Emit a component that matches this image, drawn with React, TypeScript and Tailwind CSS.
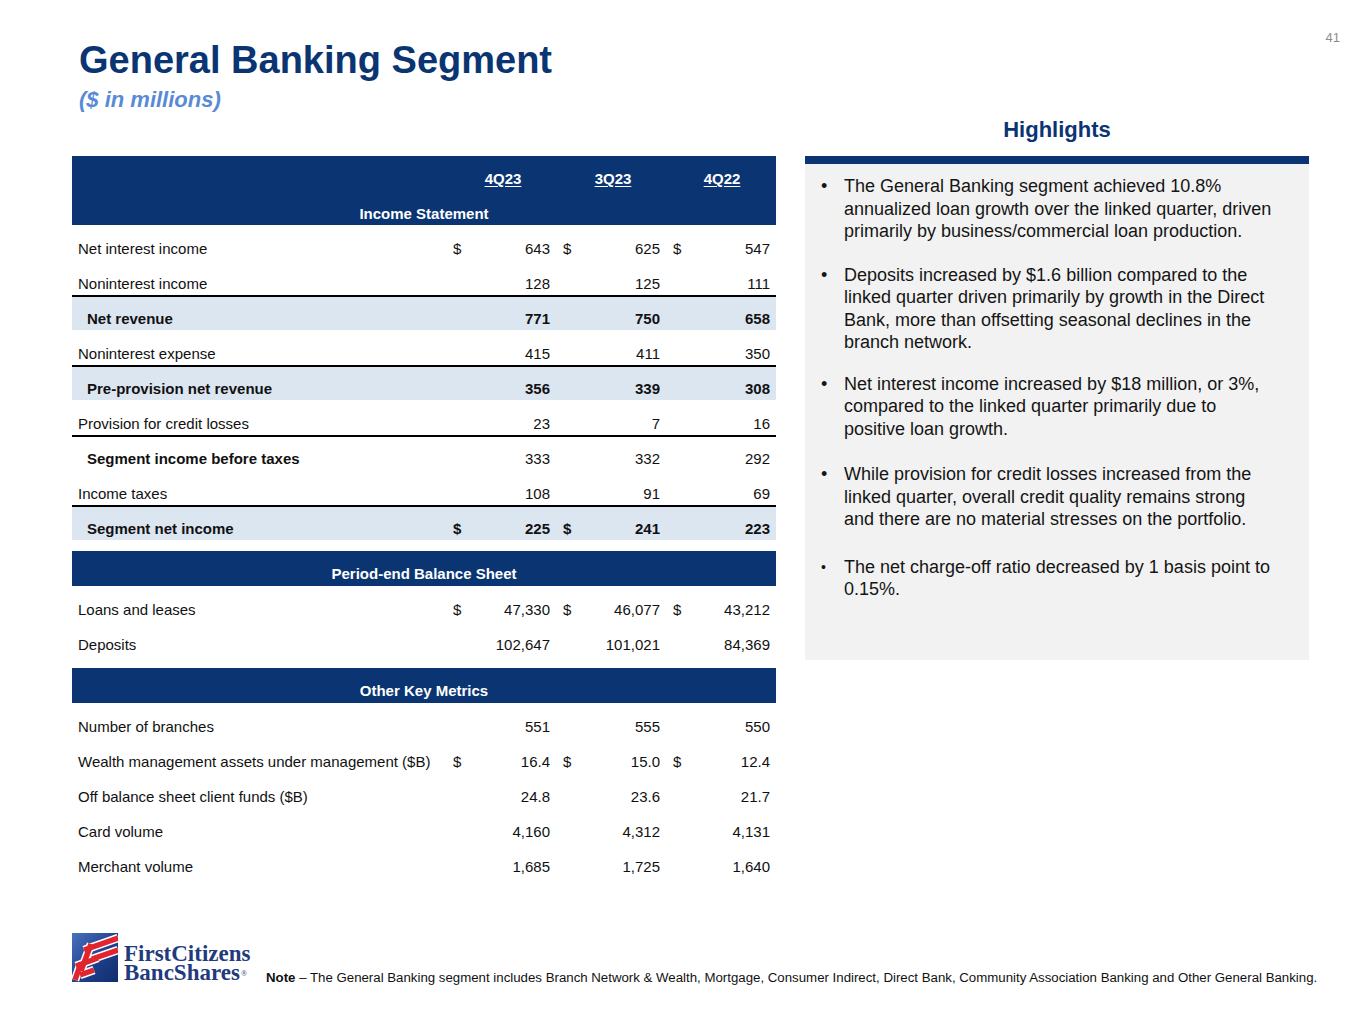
import React from 'react';

type Row = {
  label: string;
  values: string[];
  dollars?: boolean[];
  bold?: boolean;
  boldLabel?: boolean;
  shade?: boolean;
  rule?: boolean;
};

const incomeRows: Row[] = [
  { label: 'Net interest income', values: ['643', '625', '547'], dollars: [true, true, true] },
  { label: 'Noninterest income', values: ['128', '125', '111'] },
  { label: 'Net revenue', values: ['771', '750', '658'], bold: true, shade: true, rule: true },
  { label: 'Noninterest expense', values: ['415', '411', '350'] },
  { label: 'Pre-provision net revenue', values: ['356', '339', '308'], bold: true, shade: true, rule: true },
  { label: 'Provision for credit losses', values: ['23', '7', '16'] },
  { label: 'Segment income before taxes', values: ['333', '332', '292'], boldLabel: true, rule: true },
  { label: 'Income taxes', values: ['108', '91', '69'] },
  {
    label: 'Segment net income',
    values: ['225', '241', '223'],
    dollars: [true, true, false],
    bold: true,
    shade: true,
    rule: true,
  },
];

const balanceRows: Row[] = [
  { label: 'Loans and leases', values: ['47,330', '46,077', '43,212'], dollars: [true, true, true] },
  { label: 'Deposits', values: ['102,647', '101,021', '84,369'] },
];

const metricRows: Row[] = [
  { label: 'Number of branches', values: ['551', '555', '550'] },
  {
    label: 'Wealth management assets under management ($B)',
    values: ['16.4', '15.0', '12.4'],
    dollars: [true, true, true],
  },
  { label: 'Off balance sheet client funds ($B)', values: ['24.8', '23.6', '21.7'] },
  { label: 'Card volume', values: ['4,160', '4,312', '4,131'] },
  { label: 'Merchant volume', values: ['1,685', '1,725', '1,640'] },
];

const highlights: string[][] = [
  [
    'The General Banking segment achieved 10.8%',
    'annualized loan growth over the linked quarter, driven',
    'primarily by business/commercial loan production.',
  ],
  [
    'Deposits increased by $1.6 billion compared to the',
    'linked quarter driven primarily by growth in the Direct',
    'Bank, more than offsetting seasonal declines in the',
    'branch network.',
  ],
  [
    'Net interest income increased by $18 million, or 3%,',
    'compared to the linked quarter primarily due to',
    'positive loan growth.',
  ],
  [
    'While provision for credit losses increased from the',
    'linked quarter, overall credit quality remains strong',
    'and there are no material stresses on the portfolio.',
  ],
  ['The net charge-off ratio decreased by 1 basis point to', '0.15%.'],
];

// gaps under each bullet, read off the slide
const bulletGaps = ['mb-[21px]', 'mb-[19px]', 'mb-[23px]', 'mb-[25px]', ''];

const colWidths = ['w-[110px] pr-[8px]', 'w-[110px] pr-[8px]', 'w-[108px] pr-[6px]'];

function TableRow({ row }: { row: Row }) {
  const strong = row.bold ? 'font-bold' : '';
  return (
    <div
      className={`flex h-[35px] items-end pb-[3px] text-[15px] leading-[17px] text-[#111] ${
        row.shade ? 'bg-[#dce6f1]' : ''
      } ${row.rule ? 'border-t-2 border-black' : ''}`}
    >
      <div
        className={`w-[376px] ${row.bold || row.boldLabel ? 'pl-[15px] font-bold' : 'pl-[6px]'}`}
      >
        {row.label}
      </div>
      {row.values.map((v, i) => (
        <div key={i} className={`flex justify-between pl-[5px] ${colWidths[i]} ${strong}`}>
          <span>{row.dollars?.[i] ? '$' : ''}</span>
          <span>{v}</span>
        </div>
      ))}
    </div>
  );
}

function SectionHeader({ title }: { title: string }) {
  return (
    <div className="h-[35px] bg-[#0a3572] pt-[14px] text-center text-[15px] font-bold leading-[17px] text-white">
      {title}
    </div>
  );
}

function Logo() {
  return (
    <div className="flex w-[194px] items-end">
      <svg width="46" height="49" viewBox="0 0 46 49">
        <defs>
          <linearGradient id="fcb" x1="0" y1="0" x2="1" y2="1">
            <stop offset="0" stopColor="#4a72bf" />
            <stop offset="0.55" stopColor="#1d3f8c" />
            <stop offset="1" stopColor="#122d6b" />
          </linearGradient>
        </defs>
        <rect width="46" height="49" fill="url(#fcb)" />
        <g stroke="#fff" strokeWidth="8.5" strokeLinecap="butt" fill="none">
          <path d="M12 17 L46 5" />
          <path d="M20 26 L46 17" />
          <path d="M19 11 L9 38" />
          <path d="M4 33 L26 25" />
          <path d="M8 42 L22 37" />
          <path d="M9 30 L3 47" />
        </g>
        <g stroke="#e0252f" strokeWidth="5.5" strokeLinecap="butt" fill="none">
          <path d="M12 17 L46 5" />
          <path d="M20 26 L46 17" />
          <path d="M19 11 L9 38" />
          <path d="M4 33 L26 25" />
          <path d="M8 42 L22 37" />
          <path d="M9 30 L3 47" />
        </g>
      </svg>
      <div className="ml-[6px] font-['Liberation_Serif','Times_New_Roman',serif] text-[23px] font-bold text-[#1f3b7d]">
        <div className="h-[19px] leading-[20px]">FirstCitizens</div>
        <div className="h-[19px] leading-[20px]">
          BancShares<sup className="ml-[1px] text-[8px] font-normal">®</sup>
        </div>
      </div>
    </div>
  );
}

export default function App() {
  return (
    <div className="flex h-[1024px] w-[1365px] flex-col bg-white font-['Liberation_Sans',Arial,sans-serif]">
      <div className="flex justify-between pl-[79px] pr-[25px] pt-[30px]">
        <div className="mt-[11px]">
          <h1 className="text-[38px] font-bold leading-[38px] text-[#0a3572]">General Banking Segment</h1>
          <p className="mt-[8px] text-[22px] font-bold italic leading-[26px] text-[#5b8ad5]">($ in millions)</p>
        </div>
        <div className="text-[13px] leading-[15px] text-[#8c8c8c]">41</div>
      </div>

      <div className="flex">
        <div className="ml-[72px] mt-[43px] w-[704px]">
          <div className="h-[69px] bg-[#0a3572] pt-[14px] text-[15px] font-bold leading-[17px] text-white">
            <div className="flex">
              <div className="w-[376px]" />
              {['4Q23', '3Q23', '4Q22'].map((q, i) => (
                <div key={q} className={`${i === 2 ? 'w-[108px]' : 'w-[110px]'} text-center`}>
                  <span className="underline underline-offset-2">{q}</span>
                </div>
              ))}
            </div>
            <div className="mt-[18px] text-center">Income Statement</div>
          </div>
          {incomeRows.map(r => (
            <TableRow key={r.label} row={r} />
          ))}

          <div className="mt-[11px]">
            <SectionHeader title="Period-end Balance Sheet" />
          </div>
          {balanceRows.map(r => (
            <TableRow key={r.label} row={r} />
          ))}

          <div className="mt-[12px]">
            <SectionHeader title="Other Key Metrics" />
          </div>
          {metricRows.map(r => (
            <TableRow key={r.label} row={r} />
          ))}
        </div>

        <div className="ml-[29px] w-[504px]">
          <h2 className="mt-[4px] text-center text-[22px] font-bold leading-[26px] text-[#0a3572]">Highlights</h2>
          <div className="mt-[13px] h-[8px] bg-[#0a3572]" />
          <div className="h-[496px] bg-[#f2f2f2] pl-[16px] pt-[11px] text-[18px] leading-[22.5px] text-[#151515]">
            {highlights.map((lines, i) => (
              <div key={i} className={`flex ${bulletGaps[i]}`}>
                <span className={`w-[23px] shrink-0 ${i === 4 ? 'text-[14px]' : ''}`}>•</span>
                <div className="whitespace-nowrap">
                  {lines.map((l, j) => (
                    <div key={j}>{l}</div>
                  ))}
                </div>
              </div>
            ))}
          </div>
        </div>
      </div>

      <div className="mt-auto flex items-end pb-[42px] pl-[72px]">
        <Logo />
        <p className="mb-[-3px] text-[13.25px] leading-[15px] text-[#111]">
          <span className="font-bold">Note</span> – The General Banking segment includes Branch Network &amp; Wealth,
          Mortgage, Consumer Indirect, Direct Bank, Community Association Banking and Other General Banking.
        </p>
      </div>
    </div>
  );
}
